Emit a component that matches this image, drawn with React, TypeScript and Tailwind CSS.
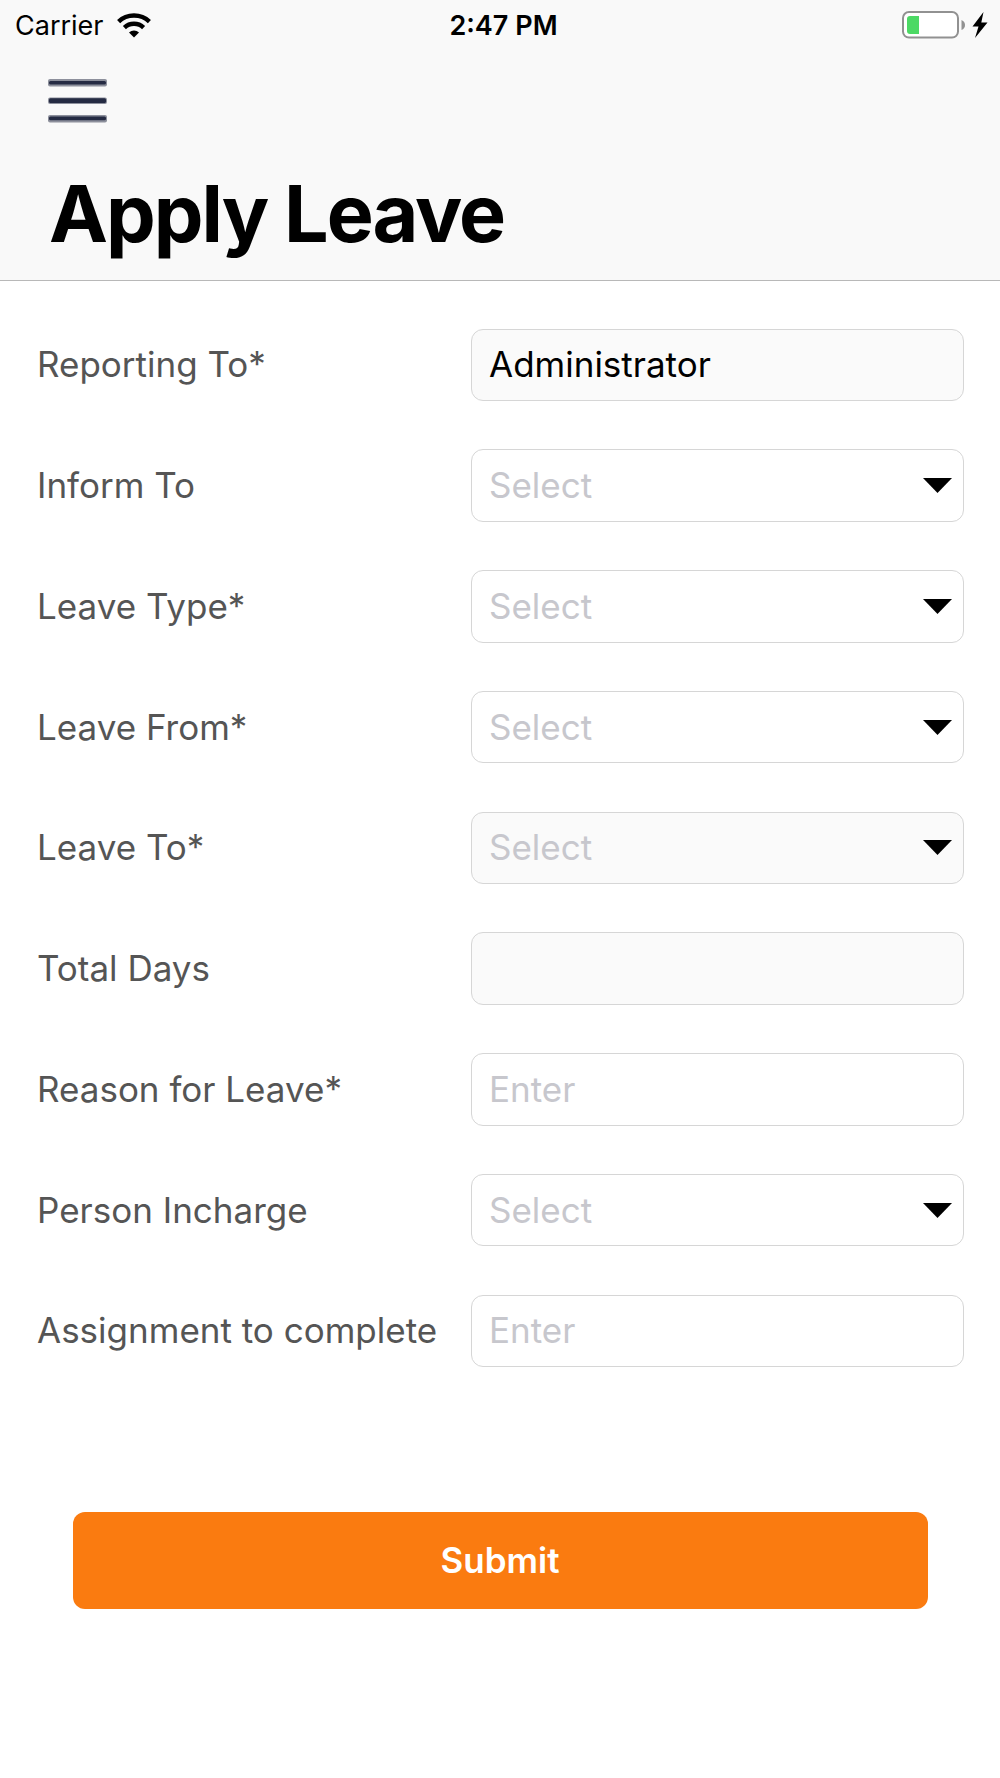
type Field = {
  label: string;
  kind: "text" | "select";
  value?: string;
  placeholder?: string;
  disabled?: boolean;
  tracking: string;
};

const fields: Field[] = [
  { label: "Reporting To*", kind: "text", value: "Administrator", disabled: true, tracking: "tracking-[0px]" },
  { label: "Inform To", kind: "select", placeholder: "Select", tracking: "tracking-[0px]" },
  { label: "Leave Type*", kind: "select", placeholder: "Select", tracking: "tracking-[0px]" },
  { label: "Leave From*", kind: "select", placeholder: "Select", tracking: "tracking-[0px]" },
  { label: "Leave To*", kind: "select", placeholder: "Select", disabled: true, tracking: "tracking-[0px]" },
  { label: "Total Days", kind: "text", disabled: true, tracking: "tracking-[0px]" },
  { label: "Reason for Leave*", kind: "text", placeholder: "Enter", tracking: "tracking-[0px]" },
  { label: "Person Incharge", kind: "select", placeholder: "Select", tracking: "tracking-[0px]" },
  { label: "Assignment to complete", kind: "text", placeholder: "Enter", tracking: "tracking-[0px]" },
];

function WifiIcon() {
  return (
    <svg width="34" height="25" viewBox="0 0 34 25" fill="none" stroke="#000" strokeWidth="4.4">
      <path d="M1.6 8.6C10 .5 24 .5 32.4 8.6" />
      <path d="M7.4 14.6C12.7 9.5 21.3 9.5 26.6 14.6" />
      <path d="M12 19.6C14.9 16.8 19.1 16.8 22 19.6L17 24.4Z" fill="#000" stroke="none" />
    </svg>
  );
}

function BatteryIcon() {
  return (
    <svg width="64" height="28" viewBox="0 0 64 28">
      <rect x="1" y="1" width="55" height="25.6" rx="6" fill="#fff" stroke="#919191" strokeWidth="2" />
      <path d="M8 5H17V23H8Q5 23 5 20V8Q5 5 8 5Z" fill="#4cd964" />
      <path d="M59.5 9Q63 10.500 63 14T59.5 19Z" fill="#919191" />
    </svg>
  );
}

function BoltIcon() {
  return (
    <svg width="16" height="26" viewBox="0 0 16 26">
      <path d="M11.500 0L0.500 14.500H6.500L3 26L15.500 10.500H9.300Z" fill="#000" />
    </svg>
  );
}

function StatusBar() {
  return (
    <div className="grid h-[50px] grid-cols-3 items-center pl-[15px] pr-[12px]">
      <div className="flex items-center gap-[13px]">
        <span className="text-[27px] leading-none tracking-[0px]">Carrier</span>
        <WifiIcon />
      </div>
      <span className="pl-1 text-center text-[27px] leading-none font-semibold tracking-[0px]">2:47 PM</span>
      <div className="flex items-center justify-end gap-[6px]">
        <BatteryIcon />
        <BoltIcon />
      </div>
    </div>
  );
}

function MenuButton() {
  return (
    <button aria-label="Menu" className="ml-12 mt-[29px] block h-11 w-[59px]">
      <svg width="59" height="44" viewBox="0 0 59 44">
        <g fill="#8d909c">
          <rect y="0" width="59" height="7.500" rx="2" />
          <rect y="18.500" width="59" height="6.500" rx="2" />
          <rect y="36" width="59" height="7.500" rx="2" />
        </g>
        <g fill="#252b43">
          <rect x="1" y="2" width="57" height="3.600" rx="1.500" />
          <rect x="1" y="19.300" width="57" height="4.600" rx="1.500" />
          <rect x="1" y="37.600" width="57" height="3.600" rx="1.500" />
        </g>
      </svg>
    </button>
  );
}

function FieldRow({ field }: { field: Field }) {
  return (
    <div className="flex h-[72.500px] items-center">
      <div className={`w-[434px] whitespace-nowrap text-[35px] leading-none text-[#555] ${field.tracking}`}>{field.label}</div>
      <div
        className={`flex h-full w-[493px] items-center justify-between rounded-[12px] border border-[#d6d6d6] pl-[17px] pr-[11px] text-[35px] leading-none ${
          field.disabled ? "bg-[#fafafa]" : "bg-white"
        }`}
      >
        {field.value ? (
          <span className="tracking-[0px] text-black">{field.value}</span>
        ) : (
          <span className="tracking-[0px] text-[#c7c7cd]">{field.placeholder}</span>
        )}
        {field.kind === "select" && (
          <svg width="29" height="15" viewBox="0 0 29 15">
            <path d="M0 0H29L14.500 15Z" fill="#000" />
          </svg>
        )}
      </div>
    </div>
  );
}

export default function App() {
  return (
    <div className="h-[1778px] w-[1000px] overflow-hidden bg-white font-['Inter',sans-serif] text-black">
      <header className="h-[281px] border-b border-[#b8b8b8] bg-[#f9f9f9]">
        <StatusBar />
        <MenuButton />
        <h1 className="mt-[50px] ml-[49px] text-[79px] leading-[80px] font-bold tracking-[-2px]">Apply Leave</h1>
      </header>
      <main>
        <form className="flex flex-col gap-[48.250px] pt-[47.500px] pl-[37px]">
          {fields.map((f) => (
            <FieldRow key={f.label} field={f} />
          ))}
        </form>
        <button className="mt-[144.500px] ml-[72.500px] flex h-[97px] w-[855px] items-center justify-center rounded-[12px] bg-[#fa7b10] text-[35px] leading-none font-semibold text-white">
          <span>Submit</span>
        </button>
      </main>
    </div>
  );
}
